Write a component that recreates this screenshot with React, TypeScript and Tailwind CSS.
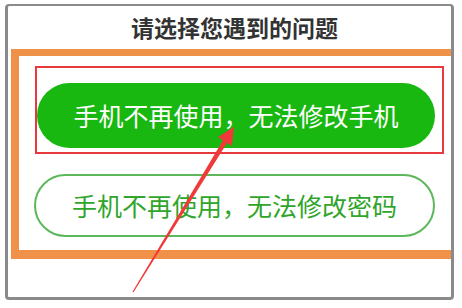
import React from "react";

const FONT = { fontFamily: '"Noto Sans CJK SC", "Noto Sans", sans-serif' };

export default function App() {
    return (
        <div className="relative w-[462px] h-[308px] bg-white overflow-hidden" style={FONT}>
            {/* Dialog frame */}
            <div className="ml-[5px] mt-[4px] w-[449px] h-[296px] border-x-[3px] border-t-2 border-b-[3px] border-[#8a8a8a] rounded-[4px] flex flex-col">
                <div className="h-[43px] flex items-center justify-center pl-[10px] text-[23px] font-bold text-[#333333] leading-none">
                    请选择您遇到的问题
                </div>

                {/* Orange highlight */}
                <div className="ml-[3px] h-[210px] border-l-[8px] border-t-[7px] border-b-[9px] border-r-0 border-[#f0914a] flex flex-col">
                    <div className="ml-[16px] mt-[10px] w-[409px] h-[88px] border-2 border-[#e8393d]">
                        <div className="mt-[15px] w-[398px] h-[65px] rounded-full bg-[#18b811] flex items-center justify-center text-white text-[25px] leading-none">
                            手机不再使用，无法修改手机
                        </div>
                    </div>
                    <div className="ml-[15px] mt-[20px] w-[401px] h-[63px] rounded-full border-2 border-[#5cb85a] flex items-center justify-center text-[#2fa52b] text-[25px] leading-none">
                        手机不再使用，无法修改密码
                    </div>
                </div>
            </div>

            {/* Red annotation arrow */}
            <svg className="absolute inset-0 pointer-events-none" width="462" height="308" viewBox="0 0 462 308">
                <polygon
                    points="234,127 232,146 227.2,142.8 133.5,292.3 132.5,291.7 223,140.2 218,137"
                    fill="#f03a3a"
                />
            </svg>
        </div>
    );
}
